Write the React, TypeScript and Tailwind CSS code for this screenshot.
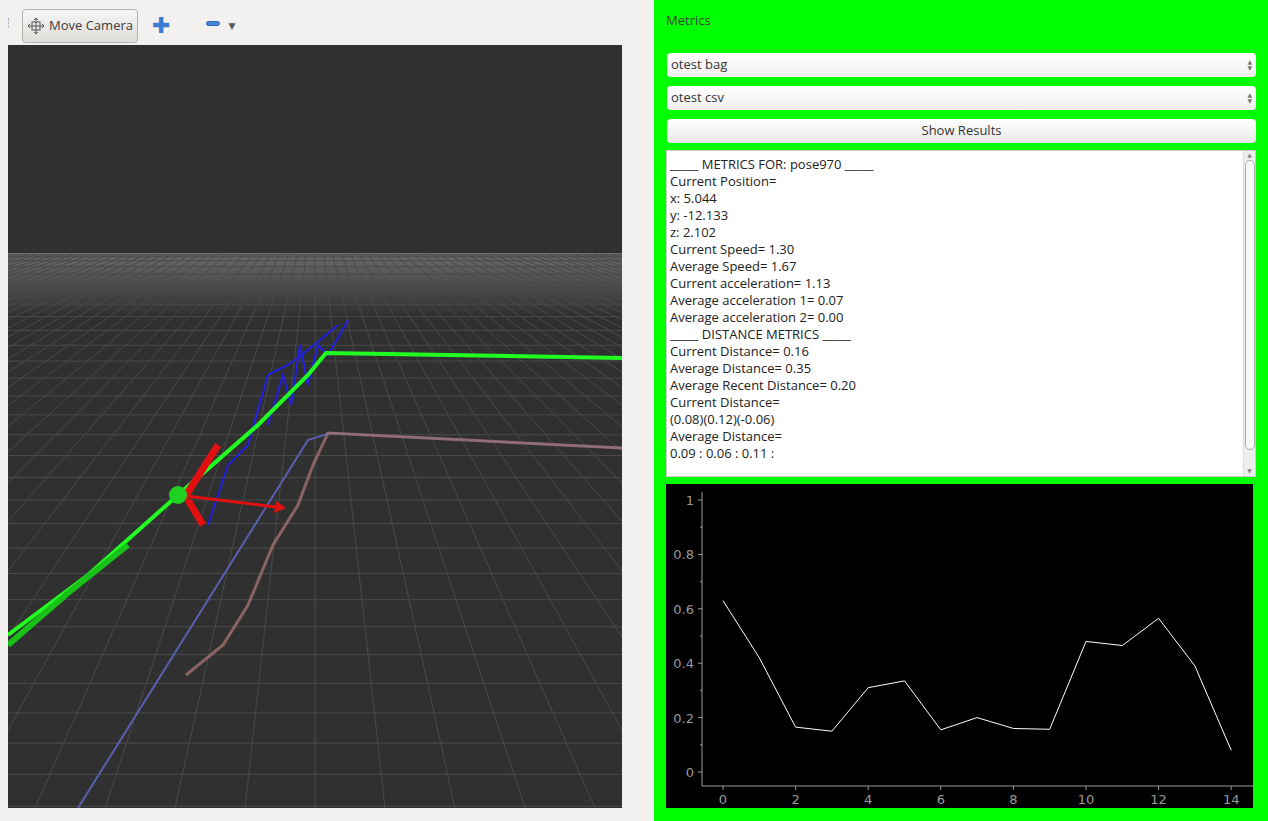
import React from "react";

const data = [0.63, 0.42, 0.165, 0.15, 0.31, 0.335, 0.155, 0.2, 0.16, 0.157, 0.48, 0.465, 0.565, 0.39, 0.08];

function Chart() {
  const x = (i: number) => 57 + i * 36.3;
  const y = (v: number) => 288 - v * 272;
  const pts = data.map((v, i) => `${x(i)},${y(v)}`).join(" ");
  return (
    <svg width="587" height="324" className="block">
      <rect width="587" height="324" fill="#000" />
      <line x1="36" y1="8" x2="36" y2="302" stroke="#999" />
      <line x1="36" y1="302" x2="587" y2="302" stroke="#999" />
      {[0, 0.2, 0.4, 0.6, 0.8, 1].map((v) => (
        <g key={v}>
          <line x1="32" x2="36" y1={y(v)} y2={y(v)} stroke="#999" />
          <text x="28" y={y(v) + 5} fill="#999" fontSize="13" textAnchor="end" fontFamily="DejaVu Sans, sans-serif">{v === 0 || v === 1 ? v : v.toFixed(1)}</text>
        </g>
      ))}
      {[0.1, 0.3, 0.5, 0.7, 0.9].map((v) => (
        <line key={v} x1="34" x2="36" y1={y(v)} y2={y(v)} stroke="#999" />
      ))}
      {[0, 2, 4, 6, 8, 10, 12, 14].map((i) => (
        <g key={i}>
          <line x1={x(i)} x2={x(i)} y1="302" y2="306" stroke="#999" />
          <text x={x(i)} y="320" fill="#999" fontSize="13" textAnchor="middle" fontFamily="DejaVu Sans, sans-serif">{i}</text>
        </g>
      ))}
      <polyline points={pts} fill="none" stroke="#fff" strokeWidth="1" />
    </svg>
  );
}

function Scene() {
  const lines = [];
  // horizontal grid lines with perspective
  for (let k = 0; k < 30; k++) {
    const yy = 210 + 560 / (1 + k * 0.45) * 0 + Math.pow(k, 1.7) * 1.8;
    if (yy > 763) break;
    lines.push(<line key={"h" + k} x1="0" x2="614" y1={yy} y2={yy} stroke="#4a4a4a" strokeWidth="1" />);
  }
  for (let k = -40; k <= 40; k++) {
    const xt = 307 + k * 9;
    const xb = 307 + k * 70;
    lines.push(<line key={"v" + k} x1={xt} y1="210" x2={xb} y2="763" stroke="#4a4a4a" strokeWidth="1" />);
  }
  return (
    <svg width="614" height="763" className="block">
      <defs>
        <linearGradient id="hz" x1="0" y1="0" x2="0" y2="1">
          <stop offset="0" stopColor="#6a6a6a" />
          <stop offset="1" stopColor="#333" />
        </linearGradient>
      </defs>
      <rect width="614" height="763" fill="#303030" />
      <rect y="208" width="614" height="60" fill="url(#hz)" />
      {lines}
      <polyline points="70,763 300,395 322,388 614,403" fill="none" stroke="#5a5fb0" strokeWidth="2" />
      <polyline points="178,630 215,600 240,560 265,500 290,460 305,420 320,388 614,403" fill="none" stroke="#a07070" strokeWidth="3" opacity="0.8" />
      <polyline points="200,480 220,420 240,400 260,330 280,320 300,305 330,280" fill="none" stroke="#2020e0" strokeWidth="2" />
      <polyline points="260,380 275,330 283,360 292,300 300,340 310,300 320,310 340,275" fill="none" stroke="#2020e0" strokeWidth="2" />
      <polyline points="318,308 614,313" fill="none" stroke="#2020e0" strokeWidth="3" />
      <polyline points="0,590 80,530 170,450 250,380 300,330 318,308 614,313" fill="none" stroke="#20ff20" strokeWidth="4" strokeDasharray="0" />
      <polyline points="0,600 60,548 120,500" fill="none" stroke="#18c018" strokeWidth="6" />
      <line x1="170" y1="450" x2="268" y2="462" stroke="#e01010" strokeWidth="3" />
      <polygon points="268,456 278,463 266,468" fill="#e01010" />
      <line x1="175" y1="455" x2="210" y2="400" stroke="#e01010" strokeWidth="7" />
      <line x1="180" y1="455" x2="195" y2="480" stroke="#e01010" strokeWidth="7" />
      <circle cx="170" cy="450" r="9" fill="#20d020" />
    </svg>
  );
}

export default function App() {
  const text = [
    "_____ METRICS FOR: pose970 _____",
    "Current Position=",
    "x: 5.044",
    "y: -12.133",
    "z: 2.102",
    "Current Speed= 1.30",
    "Average Speed= 1.67",
    "Current acceleration= 1.13",
    "Average acceleration 1= 0.07",
    "Average acceleration 2= 0.00",
    "_____ DISTANCE METRICS _____",
    "Current Distance= 0.16",
    "Average Distance= 0.35",
    "Average Recent Distance= 0.20",
    "Current Distance=",
    "(0.08)(0.12)(-0.06)",
    "Average Distance=",
    "0.09 : 0.06 : 0.11 :",
  ];
  const font = { fontFamily: "'Open Sans', 'DejaVu Sans', sans-serif" };
  return (
    <div className="flex w-[1268px] h-[821px] bg-[#f2f1f0] overflow-hidden" style={font}>
      <div className="w-[628px] flex flex-col bg-[#f2f1f0]">
        <div className="h-[45px] flex items-center pl-[8px] gap-2">
          <div className="w-[3px] h-[10px] border-l border-dotted border-gray-400" />
          <button className="h-[22px] w-[116px] ml-[3px] flex items-center gap-1 px-1 rounded border border-[#b5b3ae] bg-gradient-to-b from-[#f6f5f4] to-[#e0dedb] text-[13px] text-[#3c3c3c] mt-[6px] h-[34px]">
            <svg width="18" height="18" viewBox="0 0 18 18" fill="none" stroke="#555" strokeWidth="1">
              <path d="M9 1v16M1 9h16M9 1l-2 2M9 1l2 2M9 17l-2-2M9 17l2-2M1 9l2-2M1 9l2 2M17 9l-2-2M17 9l-2 2" />
              <rect x="5" y="5" width="8" height="8" />
            </svg>
            Move Camera
          </button>
          <span className="ml-[6px] mt-[2px] text-[#3d7bd0] text-[22px] font-bold leading-none">✚</span>
          <span className="ml-[28px] mt-[2px] w-[14px] h-[5px] bg-[#4a86d6] rounded-sm border border-[#2d64b0]" />
          <span className="text-[#555] text-[9px] mt-[6px]">▼</span>
        </div>
        <div className="ml-[8px] w-[614px] h-[763px]">
          <Scene />
        </div>
      </div>
      <div className="ml-[26px] w-[614px] h-[821px] bg-[#00ff00] flex flex-col px-[12px]">
        <div className="pt-[11px] text-[13px] text-[#3c3c3c] h-[53px]">Metrics</div>
        {["otest bag", "otest csv"].map((t) => (
          <div key={t} className="h-[24px] mb-[9px] ml-[1px] rounded bg-gradient-to-b from-white to-[#f0f0f0] flex items-center justify-between px-[4px] text-[13px] text-[#333]">
            <span>{t}</span>
            <span className="flex flex-col text-[6px] leading-[6px] text-[#777]"><span>▲</span><span>▼</span></span>
          </div>
        ))}
        <div className="h-[24px] ml-[1px] rounded bg-gradient-to-b from-white to-[#e8e8e8] flex items-center justify-center text-[13px] text-[#333]">Show Results</div>
        <div className="mt-[7px] h-[327px] bg-white flex border border-[#ccc]">
          <div className="flex-1 pl-[3px] pt-[5px] text-[13px] leading-[17px] text-[#222]">
            {text.map((l, i) => <div key={i}>{l}</div>)}
          </div>
          <div className="w-[12px] flex flex-col items-center bg-[#eee] border-l border-[#ddd]">
            <span className="text-[6px] text-[#888]">▲</span>
            <div className="w-[10px] h-[290px] rounded-full border border-[#aaa] bg-[#f8f8f8]" />
            <span className="text-[6px] text-[#888] mt-auto">▼</span>
          </div>
        </div>
        <div className="mt-[7px]">
          <Chart />
        </div>
      </div>
    </div>
  );
}
